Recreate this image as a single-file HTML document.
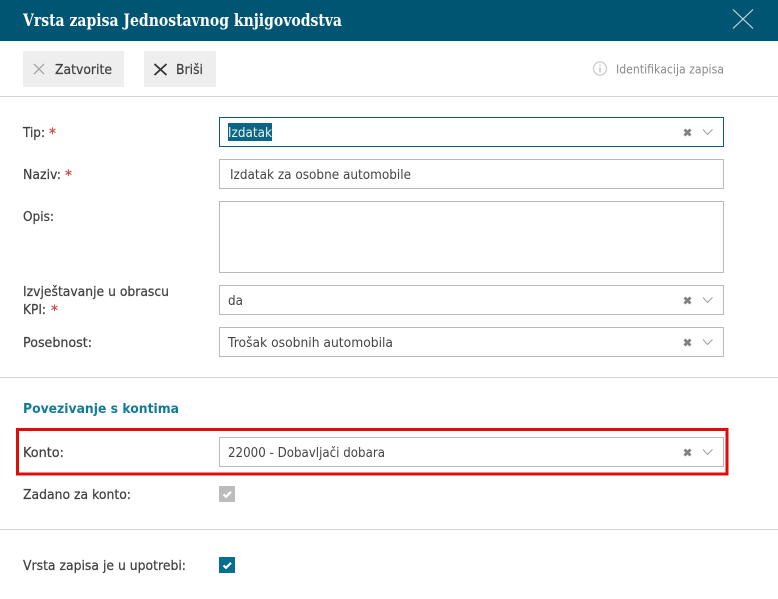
<!DOCTYPE html>
<html lang="hr">
<head>
<meta charset="utf-8">
<title>Vrsta zapisa Jednostavnog knjigovodstva</title>
<style>
html,body{margin:0;padding:0;background:#fff;width:778px;height:599px;overflow:hidden}
svg{display:block}
text{font-family:"DejaVu Sans",sans-serif;font-size:13px;fill:#3f3f3f;stroke:#3f3f3f;stroke-width:.22px}
.v{fill:#444;stroke:none}
.r{fill:#c9403c;stroke:#c9403c;font-size:14px;font-weight:normal}
.b{stroke:#bababa;stroke-width:1}
.clr{fill:none;stroke:#808080;stroke-width:2.800}
.chev{fill:none;stroke:#a0a0a0;stroke-width:1}
</style>
</head>
<body>
<svg width="778" height="599" viewBox="0 0 778 599" xmlns="http://www.w3.org/2000/svg">
<rect width="778" height="599" fill="#fff"/>
<rect width="778" height="41" fill="#005672"/>
<text x="23" y="26" textLength="319" lengthAdjust="spacingAndGlyphs" style="font-family:'DejaVu Serif',serif;font-size:16.500px;font-weight:bold;fill:#fff;stroke:none">Vrsta zapisa Jednostavnog knjigovodstva</text>
<path d="M733 9.500L753 28.500M753 9.500L733 28.500" stroke="#c4d8df" stroke-width="1.200" fill="none"/>

<rect x="23" y="51" width="101" height="36" fill="#eeeeee"/>
<path d="M34 64L44 74M44 64L34 74" stroke="#a8a8a8" stroke-width="1.300" fill="none"/>
<text x="55" y="74" textLength="57" lengthAdjust="spacingAndGlyphs">Zatvorite</text>
<rect x="144" y="51" width="72" height="36" fill="#eeeeee"/>
<path d="M154.500 64L166.500 75M166.500 64L154.500 75" stroke="#333" stroke-width="1.800" fill="none"/>
<text x="176" y="74" textLength="27" lengthAdjust="spacingAndGlyphs">Briši</text>

<circle cx="600" cy="68.500" r="6.500" fill="none" stroke="#d0d0d0" stroke-width="1.400"/>
<path d="M600 67.500V72.500M600 64.500V66" stroke="#c4c4c4" stroke-width="1.500" fill="none"/>
<text x="616" y="73.500" textLength="108" lengthAdjust="spacingAndGlyphs" style="font-size:12.500px;fill:#8a8a8a;stroke:none">Identifikacija zapisa</text>
<rect y="96" width="778" height="1" fill="#d4d4d4"/>

<text x="23" y="137" textLength="22" lengthAdjust="spacingAndGlyphs">Tip:</text>
<text x="49" y="138" class="r">*</text>
<rect x="219.500" y="117.500" width="504" height="29" fill="#fff" stroke="#0a5f7c"/>
<rect x="228" y="123" width="44" height="18" fill="#0b6584"/>
<text x="228" y="137" textLength="44" lengthAdjust="spacingAndGlyphs" style="fill:#eaf2f5;stroke:none">Izdatak</text>
<path d="M684.500 129.500L690.500 135.500M690.500 129.500L684.500 135.500" class="clr"/>
<path d="M703 129.500L707.500 134.500L712.500 129.500" class="chev"/>

<text x="23" y="179" textLength="38" lengthAdjust="spacingAndGlyphs">Naziv:</text>
<text x="65" y="180" class="r">*</text>
<rect x="219.500" y="159.500" width="504" height="29" fill="#fff" class="b"/>
<text x="230" y="179" textLength="181" lengthAdjust="spacingAndGlyphs" class="v">Izdatak za osobne automobile</text>

<text x="23" y="221" textLength="31" lengthAdjust="spacingAndGlyphs">Opis:</text>
<rect x="219.500" y="201.500" width="504" height="71" fill="#fff" class="b"/>

<text x="23" y="296" textLength="146" lengthAdjust="spacingAndGlyphs">Izvještavanje u obrascu</text>
<text x="23" y="314" textLength="23" lengthAdjust="spacingAndGlyphs">KPI:</text>
<text x="51" y="315" class="r">*</text>
<rect x="219.500" y="285.500" width="504" height="29" fill="#fff" class="b"/>
<text x="228" y="305" textLength="15" lengthAdjust="spacingAndGlyphs" class="v">da</text>
<path d="M684.500 297.500L690.500 303.500M690.500 297.500L684.500 303.500" class="clr"/>
<path d="M703 297.500L707.500 302.500L712.500 297.500" class="chev"/>

<text x="23" y="347" textLength="69" lengthAdjust="spacingAndGlyphs">Posebnost:</text>
<rect x="219.500" y="327.500" width="504" height="29" fill="#fff" class="b"/>
<text x="228" y="347" textLength="165" lengthAdjust="spacingAndGlyphs" class="v">Trošak osobnih automobila</text>
<path d="M684.500 339.500L690.500 345.500M690.500 339.500L684.500 345.500" class="clr"/>
<path d="M703 339.500L707.500 344.500L712.500 339.500" class="chev"/>

<rect y="377" width="778" height="1" fill="#d4d4d4"/>
<text x="23" y="413" textLength="156" lengthAdjust="spacingAndGlyphs" style="font-size:13.500px;font-weight:bold;fill:#137a98;stroke:none">Povezivanje s kontima</text>

<rect x="17.500" y="429.500" width="709.500" height="44.500" fill="none" stroke="#e00b0b" stroke-width="3"/>
<text x="23" y="457" textLength="41" lengthAdjust="spacingAndGlyphs">Konto:</text>
<rect x="219.500" y="437.500" width="504" height="29" fill="#fff" class="b"/>
<text x="228" y="457" textLength="157" lengthAdjust="spacingAndGlyphs" class="v">22000 - Dobavljači dobara</text>
<path d="M684.500 449.500L690.500 455.500M690.500 449.500L684.500 455.500" class="clr"/>
<path d="M703 449.500L707.500 454.500L712.500 449.500" class="chev"/>

<text x="23" y="499" textLength="108" lengthAdjust="spacingAndGlyphs">Zadano za konto:</text>
<rect x="219" y="486" width="16" height="16" fill="#bcbcbc"/>
<path d="M223.500 494.500L226 496.800L231 491.800" fill="none" stroke="#fff" stroke-width="2.200"/>

<rect y="529" width="778" height="1" fill="#d4d4d4"/>

<text x="23" y="570" textLength="163" lengthAdjust="spacingAndGlyphs">Vrsta zapisa je u upotrebi:</text>
<rect x="219" y="557" width="16" height="16" fill="#066f8f"/>
<path d="M223.500 565.500L226 567.800L231 562.800" fill="none" stroke="#fff" stroke-width="2.200"/>
</svg>
</body>
</html>
